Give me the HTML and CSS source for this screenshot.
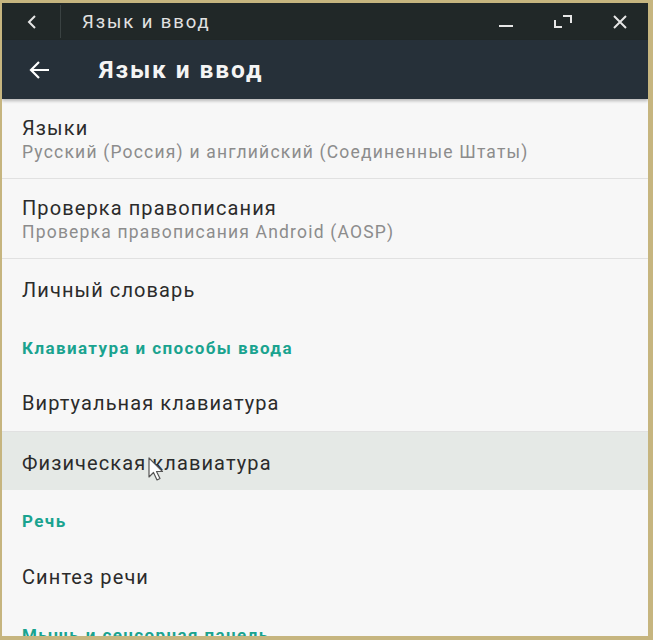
FILE: index.html
```html
<!DOCTYPE html>
<html lang="ru">
<head>
<meta charset="utf-8">
<link rel="stylesheet" href="styles.css">
</head>
<body>
<div class="window">
  <div class="titlebar">
    <div class="tb-back">
      <svg width="12" height="16" viewBox="0 0 12 16"><path d="M9 2 L3 8 L9 14" fill="none" stroke="#e6e6e6" stroke-width="2"/></svg>
    </div>
    <div class="tb-sep"></div>
    <div class="tb-title">Язык и ввод</div>
    <div class="tb-controls">
      <div class="tb-btn">
        <svg width="16" height="16" viewBox="0 0 16 16"><path d="M1 12 H15" stroke="#e6e6e6" stroke-width="2"/></svg>
      </div>
      <div class="tb-btn">
        <svg width="20" height="14" viewBox="0 0 20 14"><path d="M10 1 H18 V8" fill="none" stroke="#e6e6e6" stroke-width="2"/><path d="M2 5 V12 H9" fill="none" stroke="#e6e6e6" stroke-width="2"/></svg>
      </div>
      <div class="tb-btn">
        <svg width="16" height="16" viewBox="0 0 16 16"><path d="M2 2 L14 14 M14 2 L2 14" stroke="#e6e6e6" stroke-width="2"/></svg>
      </div>
    </div>
  </div>
  <div class="toolbar">
    <div class="tool-back">
      <svg width="22" height="20" viewBox="0 0 22 20"><path d="M21 10 H3 M11 2 L3 10 L11 18" fill="none" stroke="#ffffff" stroke-width="2.2"/></svg>
    </div>
    <div class="tool-title">Язык и ввод</div>
  </div>
  <div class="content">
    <div class="item two-line divided">
      <div class="item-title">Языки</div>
      <div class="item-sub">Русский (Россия) и английский (Соединенные Штаты)</div>
    </div>
    <div class="item two-line divided">
      <div class="item-title">Проверка правописания</div>
      <div class="item-sub">Проверка правописания Android (AOSP)</div>
    </div>
    <div class="item single">
      <div class="item-title">Личный словарь</div>
    </div>
    <div class="category">Клавиатура и способы ввода</div>
    <div class="item single divided">
      <div class="item-title">Виртуальная клавиатура</div>
    </div>
    <div class="item single hover">
      <div class="item-title">Физическая клавиатура</div>
    </div>
    <div class="category">Речь</div>
    <div class="item single">
      <div class="item-title">Синтез речи</div>
    </div>
    <div class="category">Мышь и сенсорная панель</div>
  </div>
  <svg class="cursor" width="16" height="26" viewBox="0 0 16 26"><path d="M1 1 V20 L5.5 15.5 L9 23 L12 21.5 L8.5 14.5 H14.5 Z" fill="#ffffff" stroke="#555" stroke-width="1.2" stroke-linejoin="round"/></svg>
</div>
</body>
</html>
```

FILE: styles.css
```css
html, body {
  margin: 0;
  padding: 0;
}
body {
  background: #c6b57f;
  width: 653px;
  height: 640px;
  overflow: hidden;
  font-family: Roboto, "Noto Sans", sans-serif;
}
.window {
  position: relative;
  margin: 3px 5px 4px 2px;
  height: 633px;
  background: #f7f7f7;
  overflow: hidden;
  display: flex;
  flex-direction: column;
}
.titlebar {
  height: 37px;
  flex: 0 0 37px;
  background: #212828;
  display: flex;
  align-items: center;
}
.tb-back {
  width: 56px;
  display: flex;
  justify-content: center;
  padding-left: 2px;
}
.tb-sep {
  width: 1px;
  height: 33px;
  background: #3a4242;
}
.tb-title {
  margin-left: 21px;
  color: #e2e2e2;
  font-size: 18.5px;
  letter-spacing: 1.9px;
  flex: 1;
}
.tb-controls {
  display: flex;
  align-items: center;
  margin-right: 0;
}
.tb-btn {
  width: 57px;
  display: flex;
  justify-content: center;
}
.toolbar {
  height: 59px;
  flex: 0 0 59px;
  background: #263039;
  display: flex;
  align-items: center;
  box-shadow: 0 2px 3px rgba(0,0,0,0.25);
  position: relative;
  z-index: 1;
}
.tool-back {
  width: 26px;
  margin-left: 26px;
  display: flex;
  align-items: center;
}
.tool-title {
  margin-left: 45px;
  color: #f4f4f4;
  font-size: 24.5px;
  letter-spacing: 1.9px;
  font-weight: bold;
}
.content {
  flex: 1;
  display: flex;
  flex-direction: column;
}
.item {
  padding: 0 20px;
  display: flex;
  flex-direction: column;
  justify-content: center;
  box-sizing: border-box;
}
.two-line {
  height: 80px;
  flex: 0 0 80px;
  padding-top: 2px;
}
.single {
  height: 58px;
  flex: 0 0 58px;
  padding-top: 3px;
}
.divided {
  border-bottom: 1px solid #e1e1e1;
}
.single.divided {
  height: 59px;
  flex-basis: 59px;
  padding-top: 2px;
}
.hover {
  background: #e5e9e6;
}
.item-title {
  color: #2b2b2b;
  font-size: 20px;
  letter-spacing: 1.1px;
  line-height: 26px;
}
.item-sub {
  color: #8c8c8c;
  font-size: 17.5px;
  letter-spacing: 1.2px;
  line-height: 23px;
}
.category {
  height: 56px;
  flex: 0 0 56px;
  box-sizing: border-box;
  padding: 5px 20px 0;
  display: flex;
  align-items: center;
  color: #1aa38f;
  font-size: 17px;
  letter-spacing: 1.4px;
  font-weight: bold;
}
.cursor {
  position: absolute;
  left: 146px;
  top: 454px;
}
```
